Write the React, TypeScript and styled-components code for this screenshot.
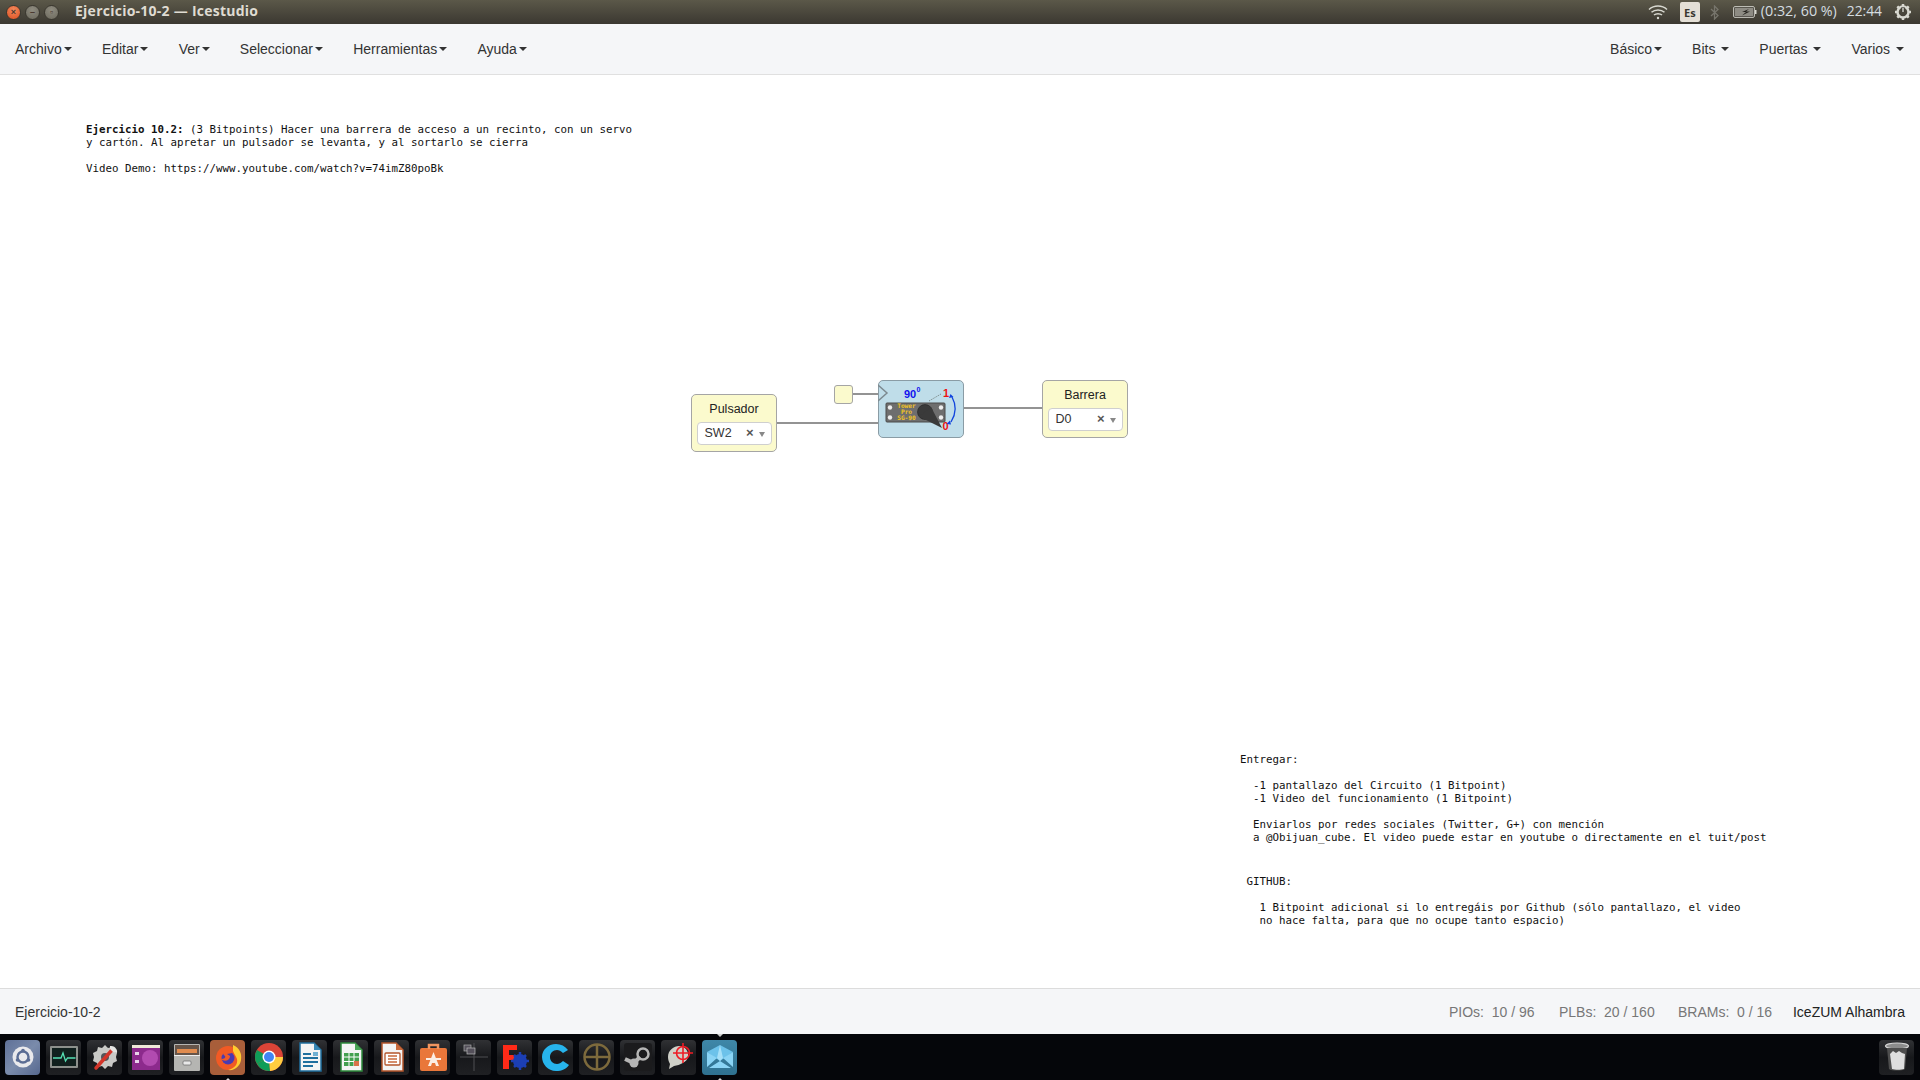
import React from "react";
import styled, { createGlobalStyle } from "styled-components";

const Global = createGlobalStyle`
  html, body { margin: 0; padding: 0; height: 100%; background: #fff; overflow: hidden; }
  #root { height: 100%; }
  * { box-sizing: border-box; }
`;

const Page = styled.div`
  width: 1920px; height: 1080px; display: flex; flex-direction: column;
  font-family: "Liberation Sans", Arial, sans-serif; font-size: 14px; color: #333;
`;

const TitleBar = styled.header`
  height: 24px; flex: none; display: flex; align-items: center; padding: 0 8px 0 6px;
  background: linear-gradient(#5b5849, #3b3831);
  color: #dfdbd2;
`;
const WinButtons = styled.div`display: flex; gap: 4px; width: 69px;`;
const WinButton = styled.span<{ $close?: boolean }>`
  width: 15px; height: 15px; border-radius: 50%; display: flex; align-items: center; justify-content: center;
  font: bold 9px "Liberation Sans", sans-serif; color: #4a3a30;
  background: ${p => p.$close ? "radial-gradient(circle at 50% 30%, #f58a5d, #dc4f20)" : "radial-gradient(circle at 50% 30%, #8f8c80, #6c695d)"};
  border: 1px solid #3a372f;
`;
const WinTitle = styled.span`
  font-family: "Open Sans", sans-serif; font-weight: 700; font-size: 14px; letter-spacing: 0.25px; flex: 1;
  line-height: 22px; height: 24px;
`;
const Tray = styled.div`display: flex; align-items: center; height: 24px;`;
const EsBadge = styled.span`
  width: 20px; height: 20px; border-radius: 2px; background: #e4dfd6; color: #3b3831;
  font: bold 11px "Open Sans", sans-serif; display: flex; align-items: center; justify-content: center;
  margin: 0 10px 0 12px;
`;
const TrayText = styled.span<{ $ml: number; $size: number }>`
  font-family: "Open Sans", sans-serif; font-size: ${p => p.$size}px; margin-left: ${p => p.$ml}px; white-space: nowrap; color: #d5dde0;
  line-height: 22px; height: 24px;
`;

const NavBar = styled.nav`
  height: 51px; flex: none; background: #f5f6f8; border-bottom: 1px solid #e0e0e0;
  display: flex; justify-content: space-between; align-items: stretch;
`;
const NavGroup = styled.div<{ $right?: boolean }>`
  display: flex; align-items: stretch; ${p => p.$right ? "margin-right: 1px;" : "gap: 0.2px;"}
`;
const NavItem = styled.a`
  display: flex; align-items: center; padding: 0 15px; color: #333; white-space: pre; height: 49px;
`;
const Caret = styled.i`
  display: inline-block; margin-left: 2px; border-top: 4px solid #333;
  border-left: 4px solid transparent; border-right: 4px solid transparent;
`;

const Canvas = styled.main`flex: 1; position: relative; background: #fff; overflow: hidden;`;
const Note = styled.pre<{ $x: number; $y: number }>`
  position: absolute; left: ${p => p.$x}px; top: ${p => p.$y}px; margin: 0;
  font-family: "DejaVu Sans Mono", monospace; font-size: 10.8px; line-height: 13px; color: #111;
`;
const Wire = styled.div<{ $x: number; $y: number; $w: number }>`
  position: absolute; left: ${p => p.$x}px; top: ${p => p.$y}px; width: ${p => p.$w}px; height: 2px; background: #939393;
`;
const Block = styled.div<{ $x: number; $y: number; $w: number; $h: number }>`
  position: absolute; left: ${p => p.$x}px; top: ${p => p.$y}px; width: ${p => p.$w}px; height: ${p => p.$h}px;
  background: #fbfacd; border: 1px solid #a5a5a5; border-radius: 5px;
  display: flex; flex-direction: column; align-items: center; padding: 4px;
`;
const BlockLabel = styled.div`font-size: 12.5px; line-height: 20px; color: #222; height: 23px;`;
const PinSelect = styled.div`
  width: 75px; height: 23px; background: #fff; border: 1px solid #cfcfcf; border-radius: 4px;
  display: flex; align-items: center; padding: 0 6px 2px 7px; font-size: 12.5px; color: #333;
`;
const PinName = styled.span`flex: 1;`;
const PinClear = styled.span`font-size: 13px; font-weight: bold; color: #555; margin-right: 5px;`;
const PinArrow = styled.i`
  margin-top: 4px; border-top: 5px solid #888; border-left: 3.5px solid transparent; border-right: 3.5px solid transparent;
`;
const Constant = styled.div`
  position: absolute; left: 834px; top: 310px; width: 19px; height: 19px;
  background: #fbfacd; border: 1px solid #a5a5a5; border-radius: 3px;
`;
const Servo = styled.div`
  position: absolute; left: 878px; top: 305px; width: 86px; height: 58px;
  background: #bfdde9; border: 1px solid #8a9ca5; border-radius: 5px; overflow: visible;
`;

const StatusBar = styled.footer`
  height: 46px; flex: none; background: #f5f6f8; border-top: 1px solid #dcdcdc;
  display: flex; align-items: center; justify-content: space-between; padding: 0 15px;
`;
const Stats = styled.div`display: flex; align-items: center;`;
const Stat = styled.span<{ $w: number }>`color: #777; white-space: pre; width: ${p => p.$w}px;`;
const Board = styled.span`color: #222;`;

const Dock = styled.div`
  height: 46px; flex: none; background: #05060a; display: flex; align-items: center;
  padding: 0 6px 0 5px; gap: 6px;
`;
const Tile = styled.div<{ $bg?: string }>`
  position: relative; width: 35px; height: 35px; border-radius: 4px; flex: none;
  background: ${p => p.$bg ?? "linear-gradient(#303134, #17181b 50%, #1f2023)"};
  display: flex; align-items: center; justify-content: center;
`;
const Spacer = styled.div`flex: 1;`;
const Pip = styled.i<{ $top?: boolean }>`
  position: absolute; left: 50%; margin-left: -3px;
  ${p => p.$top ? "top: -6px; border-top: 3px solid #ccc;" : "bottom: -6px; border-bottom: 3px solid #ddd;"}
  border-left: 3px solid transparent; border-right: 3px solid transparent;
`;

const S = (props: React.SVGProps<SVGSVGElement>) => <svg width="30" height="30" viewBox="0 0 30 30" {...props} />;

const icons: { bg?: string; pip?: "b" | "tb"; el: React.ReactNode }[] = [
  { bg: "linear-gradient(135deg,#5f7198,#7a8bab 50%,#56688f)", el: <S><circle cx="15" cy="15" r="10.500" fill="#e9e9ec" /><circle cx="15" cy="15" r="5.500" fill="none" stroke="#5b6d94" strokeWidth="2.400" /><circle cx="15" cy="8.500" r="1.800" fill="#5b6d94" /><circle cx="9.500" cy="18" r="1.800" fill="#5b6d94" /><circle cx="20.500" cy="18" r="1.800" fill="#5b6d94" /></S> },
  { el: <S><rect x="1" y="4" width="28" height="22" rx="1" fill="#8d908c" /><rect x="3" y="6" width="24" height="18" fill="#11201e" /><path d="M4 16h8l2-5 2.500 8 2-3h8" fill="none" stroke="#56e0b4" strokeWidth="1.300" /></S> },
  { el: <S><path d="M15 3l3 3 4-1 1 4 4 2-1 4 1 4-4 2-1 4-4-1-3 3-3-3-4 1-1-4-4-2 1-4-1-4 4-2 1-4 4 1z" fill="#c9c9c6" /><circle cx="15" cy="15" r="4" fill="#55565a" /><path d="M6 26L22 8" stroke="#d3352a" strokeWidth="3.500" strokeLinecap="round" /><path d="M20 4a6 6 0 0 1 7 7l-4-1-3-3z" fill="#e4e4e2" /></S> },
  { el: <S><rect x="1" y="3" width="28" height="25" fill="#8c2a8c" /><rect x="1" y="3" width="28" height="3" fill="#efe8d8" /><circle cx="19" cy="16" r="8" fill="#b24bb0" /><rect x="4" y="10" width="4" height="3" fill="#e9d3e9" /><rect x="4" y="18" width="4" height="3" fill="#e9d3e9" /></S> },
  { el: <S><rect x="2" y="2" width="26" height="27" rx="1" fill="#b5b5b2" /><rect x="3" y="3" width="24" height="10" fill="#66554a" /><rect x="5" y="7" width="20" height="4" fill="#e18c4f" /><rect x="2" y="13" width="26" height="1" fill="#eee" /><rect x="11" y="19" width="8" height="4" rx="1" fill="#e8e8e8" stroke="#666" strokeWidth=".7" /></S> },
  { bg: "#a85e3a", pip: "b", el: <S><circle cx="15" cy="16" r="12" fill="#f15a24" /><path d="M20 3c7 3 9 9 8 15-1 6-6 11-13 10 7-2 10-6 9-11-1-3-3-5-4-8z" fill="#ffcb2f" /><circle cx="15" cy="16" r="6.500" fill="#4a3bb0" /><path d="M10 10c3-3 9-2 9 1l-5 1 3 2c0 5-6 6-9 3 3 0 5-1 4-3-2-1-2-3-2-4z" fill="#f15a24" /></S> },
  { el: <S><circle cx="15" cy="15" r="14" fill="#db4437" /><path d="M15 15L3 22a14 14 0 0 0 13 7z" fill="#0f9d58" /><path d="M3 22A14 14 0 0 1 3 8l12 7z" fill="#0f9d58" /><path d="M15 15h14a14 14 0 0 1-13 14z" fill="#ffcd40" /><circle cx="15" cy="15" r="6.500" fill="#fff" /><circle cx="15" cy="15" r="5" fill="#4285f4" /></S> },
  { el: <S><path d="M5 1h14l7 7v21H5z" fill="#f4f4f4" stroke="#1f6f9e" strokeWidth="1.500" /><path d="M19 1l7 7h-7z" fill="#3a88b5" /><rect x="8" y="11" width="8" height="2" fill="#1f6f9e" /><rect x="8" y="15" width="15" height="2" fill="#1f6f9e" /><rect x="8" y="19" width="15" height="2" fill="#1f6f9e" /><rect x="8" y="23" width="10" height="2" fill="#1f6f9e" /><rect x="18" y="10" width="5" height="4" fill="#6fb0d3" /></S> },
  { el: <S><path d="M5 1h14l7 7v21H5z" fill="#f4f4f4" stroke="#2e8b3c" strokeWidth="1.500" /><path d="M19 1l7 7h-7z" fill="#4aa457" /><rect x="8" y="11" width="15" height="13" fill="#43a04f" /><path d="M8 15h15M8 19.500h15M13 11v13M18 11v13" stroke="#fff" strokeWidth="1" /><rect x="18" y="19" width="5" height="5" fill="#d9734a" /></S> },
  { el: <S><path d="M5 1h14l7 7v21H5z" fill="#f4f4f4" stroke="#b4552b" strokeWidth="1.500" /><path d="M19 1l7 7h-7z" fill="#c86a3c" /><rect x="8" y="11" width="15" height="12" rx="1" fill="#fff" stroke="#b4552b" strokeWidth="1.300" /><path d="M11 14h9M11 17h9M11 20h9" stroke="#c86a3c" strokeWidth="1.300" /></S> },
  { el: <S><rect x="2" y="6" width="27" height="23" rx="2" fill="#e9773a" /><path d="M11 7V3h9v4" fill="none" stroke="#f09560" strokeWidth="2.500" /><path d="M15.500 10L10 24h3l1-3h3l1 3h3z" fill="#fbeee4" /><rect x="8" y="16" width="15" height="2" fill="#fbeee4" /></S> },
  { el: <S><path d="M15 1v28M1 15h28" stroke="#4e4e52" strokeWidth="1" /><rect x="5" y="3" width="7" height="6" fill="#54505a" stroke="#aaa" strokeWidth=".7" /><rect x="8" y="6" width="8" height="6" fill="#54505a" stroke="#bbb" strokeWidth=".7" /></S> },
  { el: <S><path d="M3 3h14v5H9v5h6v5H9v9H3z" fill="#ff2a18" /><circle cx="20" cy="19" r="5" fill="none" stroke="#1c3fb5" strokeWidth="4" /><path d="M20 10v18M11 19h18M14 13l12 12M26 13L14 25" stroke="#1c3fb5" strokeWidth="2.500" /></S> },
  { el: <S><path d="M27 8c-3-4-7-6-12-6C7 2 1 8 1 15s6 14 14 14c6 0 10-2 13-6l-6-4c-2 2-4 3-6 3-4 0-7-3-7-7s3-7 7-7c2 0 4 1 6 3z" fill="#27b4ec" /></S> },
  { el: <S><circle cx="15" cy="15" r="12.500" fill="none" stroke="#7d6a3c" strokeWidth="2.500" /><path d="M15 3v24M3 15h24" stroke="#7d6a3c" strokeWidth="2.500" /></S> },
  { el: <S><rect x="1" y="1" width="28" height="28" rx="3" fill="#1b1b1d" /><circle cx="20" cy="12" r="5.500" fill="none" stroke="#b5b5b5" strokeWidth="2.500" /><path d="M2 17l9 4 6-6" fill="none" stroke="#b5b5b5" strokeWidth="4" /><circle cx="11" cy="21" r="4.500" fill="#b5b5b5" /></S> },
  { el: <S><path d="M4 15c0-7 6-11 11-11 6 0 10 5 9 11-1 5-8 8-14 9l-5 3 1-5c-1-2-2-4-2-7z" fill="#cfd0c8" /><circle cx="19" cy="11" r="6.500" fill="none" stroke="#ee1c25" strokeWidth="1.600" /><path d="M19 1v20M9 11h20" stroke="#ee1c25" strokeWidth="1.600" /></S> },
  { bg: "linear-gradient(#3f87a8,#2f7190)", pip: "tb", el: <S><path d="M2 10l13-7 13 7-13 9z" fill="#6cc2ea" /><path d="M2 10l10 6-10 9zM28 10l-10 6 10 9zM4 26l11-7 11 7z" fill="#8ad4f5" /><path d="M15 3l-3 13 3 3 3-3z" fill="#a6e0f8" /></S> },
];

const Wifi = () => (
  <svg width="20" height="16" viewBox="0 0 20 16" fill="none" stroke="#d8d8d0" strokeWidth="1.500">
    <path d="M1 5.500c5-4.600 13-4.600 18 0M3.500 8.300c3.500-3.200 9.500-3.200 13 0M6 11c2-1.800 6-1.800 8 0" />
    <circle cx="10" cy="14" r="1.200" fill="#d8d8d0" stroke="none" />
  </svg>
);
const Bluetooth = () => (
  <svg width="9" height="15" viewBox="0 0 9 15" fill="none" stroke="#77756c" strokeWidth="1.300" style={{ marginRight: 14 }}>
    <path d="M1 4l7 6.500L4.500 14V1L8 4.500 1 11" />
  </svg>
);
const Battery = () => (
  <svg width="24" height="14" viewBox="0 0 24 14">
    <rect x=".7" y="1.700" width="20.600" height="10.600" rx="1" fill="#3b3831" stroke="#d8d8d0" strokeWidth="1" />
    <rect x="2" y="3" width="18" height="8" fill="#8e8c84" />
    <rect x="22" y="5" width="1.500" height="4" fill="#d8d8d0" />
    <path d="M16 4l-7 3h4l-4 3.500 8-4h-4z" fill="#26241f" />
  </svg>
);
const Gear = () => (
  <svg width="18" height="18" viewBox="0 0 18 18" style={{ marginLeft: 12 }}>
    <circle cx="9" cy="9" r="5.500" fill="none" stroke="#d8d8d0" strokeWidth="2.500" />
    <path d="M9 1v3M9 14v3M1 9h3M14 9h3M3.300 3.300l2.200 2.200M12.500 12.500l2.200 2.200M14.700 3.300l-2.200 2.200M5.500 12.500l-2.200 2.200" stroke="#d8d8d0" strokeWidth="2.500" />
    <path d="M9 4v5" stroke="#3b3831" strokeWidth="3" />
    <path d="M9 4.500v4.500" stroke="#d8d8d0" strokeWidth="1.400" />
  </svg>
);

const Trash = () => (
  <svg width="28" height="32" viewBox="0 0 28 32">
    <ellipse cx="14" cy="5" rx="11.500" ry="3" fill="#8c8c8c" stroke="#d5d5d5" strokeWidth="1.200" />
    <path d="M4 7l2 21c2 2 14 2 16 0l2-21" fill="#4e4e4e" />
    <path d="M7 13l3-3 3 2 3-2 3 2 3 1-1 15c-3 1-9 1-12 0z" fill="#dedede" />
  </svg>
);

const ServoLabel = styled.text`font-family: "Liberation Sans", sans-serif; font-weight: bold;`;
const ServoBrand = styled.text`font-family: "DejaVu Sans Mono", monospace; font-weight: bold; font-size: 6.2px; text-anchor: middle; fill: #f2c422;`;

const ServoArt = () => (
  <svg width="86" height="58" viewBox="0 0 86 58" style={{ display: "block", marginTop: -1, marginLeft: -1 }}>
    <path d="M0 5l9 8-9 8" fill="none" stroke="#7d8a90" strokeWidth="1.500" />
    <ServoLabel x="26" y="18" fontSize="11" fill="#1111ee">90</ServoLabel>
    <ServoLabel x="38.500" y="12" fontSize="7" fill="#1111ee">0</ServoLabel>
    <path d="M51 21L63 14" stroke="#7f8f8f" strokeWidth="1" strokeDasharray="1.500 1" />
    <rect x="8" y="23" width="59" height="19" rx="1" fill="#6e6e6e" stroke="#4a4a4a" strokeWidth="1" />
    <circle cx="12" cy="27.500" r="2.200" fill="#eee" /><circle cx="12" cy="37.500" r="2.200" fill="#eee" />
    <circle cx="63" cy="27.500" r="2.200" fill="#eee" /><circle cx="63" cy="37.500" r="2.200" fill="#eee" />
    <ServoBrand x="28.500" y="28">Tower</ServoBrand>
    <ServoBrand x="28.500" y="34">Pro</ServoBrand>
    <ServoBrand x="28.500" y="40">SG-90</ServoBrand>
    <circle cx="47" cy="32" r="7.500" fill="#3a3a3a" stroke="#222" strokeWidth=".6" />
    <path d="M41 36.500L64 48 53 27z" fill="#3a3a3a" />
    <ServoLabel x="65" y="17" fontSize="11" fill="#ee1111">1</ServoLabel>
    <ServoLabel x="64.500" y="50" fontSize="11" fill="#ee1111">0</ServoLabel>
    <path d="M74 17c4.500 8 4 17-1 25" fill="none" stroke="#1144dd" strokeWidth="1.300" />
    <path d="M71 18l1.500-4 3 3zM68.500 44l4.500 0.500-1-4z" fill="#1144dd" />
  </svg>
);

const note1 = (
  <>
    <b>Ejercicio 10.2:</b>{` (3 Bitpoints) Hacer una barrera de acceso a un recinto, con un servo
y cartón. Al apretar un pulsador se levanta, y al sortarlo se cierra

Video Demo: https://www.youtube.com/watch?v=74imZ80poBk`}
  </>
);
const note2 = `Entregar:

  -1 pantallazo del Circuito (1 Bitpoint)
  -1 Video del funcionamiento (1 Bitpoint)

  Enviarlos por redes sociales (Twitter, G+) con mención
  a @Obijuan_cube. El video puede estar en youtube o directamente en el tuit/post`;
const note3 = ` GITHUB:

   1 Bitpoint adicional si lo entregáis por Github (sólo pantallazo, el video
   no hace falta, para que no ocupe tanto espacio)`;

const leftMenu = ["Archivo", "Editar", "Ver", "Seleccionar", "Herramientas", "Ayuda"];
const rightMenu = ["Básico", "Bits ", "Puertas ", "Varios "];

export default function App() {
  return (
    <Page>
      <Global />
      <TitleBar>
        <WinButtons>
          <WinButton $close>×</WinButton>
          <WinButton>–</WinButton>
          <WinButton>▫</WinButton>
        </WinButtons>
        <WinTitle>Ejercicio-10-2 — Icestudio</WinTitle>
        <Tray>
          <Wifi />
          <EsBadge>Es</EsBadge>
          <Bluetooth />
          <Battery />
          <TrayText $ml={4} $size={14.3}>(0:32, 60 %)</TrayText>
          <TrayText $ml={10} $size={13.8}>22:44</TrayText>
          <Gear />
        </Tray>
      </TitleBar>
      <NavBar>
        <NavGroup>
          {leftMenu.map(m => <NavItem key={m}>{m}<Caret /></NavItem>)}
        </NavGroup>
        <NavGroup $right>
          {rightMenu.map(m => <NavItem key={m}>{m}<Caret /></NavItem>)}
        </NavGroup>
      </NavBar>
      <Canvas>
        <Note $x={86} $y={48}>{note1}</Note>
        <Note $x={1240} $y={678}>{note2}</Note>
        <Note $x={1240} $y={800}>{note3}</Note>
        <Wire $x={776} $y={347} $w={102} />
        <Wire $x={853} $y={318} $w={26} />
        <Wire $x={964} $y={332} $w={79} />
        <Block $x={691} $y={319} $w={86} $h={58}>
          <BlockLabel>Pulsador</BlockLabel>
          <PinSelect><PinName>SW2</PinName><PinClear>×</PinClear><PinArrow /></PinSelect>
        </Block>
        <Constant />
        <Servo><ServoArt /></Servo>
        <Block $x={1042} $y={305} $w={86} $h={58}>
          <BlockLabel>Barrera</BlockLabel>
          <PinSelect><PinName>D0</PinName><PinClear>×</PinClear><PinArrow /></PinSelect>
        </Block>
      </Canvas>
      <StatusBar>
        <span>Ejercicio-10-2</span>
        <Stats>
          <Stat $w={110}>PIOs:  10 / 96</Stat>
          <Stat $w={119}>PLBs:  20 / 160</Stat>
          <Stat $w={115}>BRAMs:  0 / 16</Stat>
          <Board>IceZUM Alhambra</Board>
        </Stats>
      </StatusBar>
      <Dock>
        {icons.map((ic, i) => (
          <Tile key={i} $bg={ic.bg}>
            {ic.el}
            {ic.pip && <Pip />}
            {ic.pip === "tb" && <Pip $top />}
          </Tile>
        ))}
        <Spacer />
        <Tile><Trash /></Tile>
      </Dock>
    </Page>
  );
}
